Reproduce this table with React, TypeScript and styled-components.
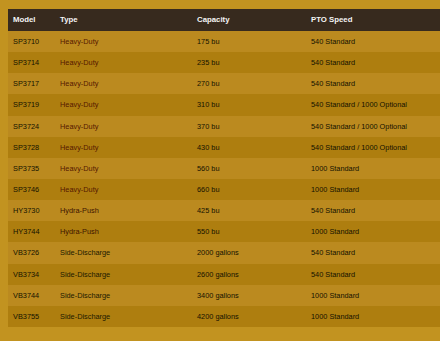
import React from 'react';
import styled, { createGlobalStyle } from 'styled-components';

type Kind = 'heavy' | 'hydra' | 'side';

interface Row {
    model: string;
    type: string;
    kind: Kind;
    capacity: string;
    pto: string;
}

const ROWS: Row[] = [
    { model: 'SP3710', type: 'Heavy-Duty', kind: 'heavy', capacity: '175 bu', pto: '540 Standard' },
    { model: 'SP3714', type: 'Heavy-Duty', kind: 'heavy', capacity: '235 bu', pto: '540 Standard' },
    { model: 'SP3717', type: 'Heavy-Duty', kind: 'heavy', capacity: '270 bu', pto: '540 Standard' },
    { model: 'SP3719', type: 'Heavy-Duty', kind: 'heavy', capacity: '310 bu', pto: '540 Standard / 1000 Optional' },
    { model: 'SP3724', type: 'Heavy-Duty', kind: 'heavy', capacity: '370 bu', pto: '540 Standard / 1000 Optional' },
    { model: 'SP3728', type: 'Heavy-Duty', kind: 'heavy', capacity: '430 bu', pto: '540 Standard / 1000 Optional' },
    { model: 'SP3735', type: 'Heavy-Duty', kind: 'heavy', capacity: '560 bu', pto: '1000 Standard' },
    { model: 'SP3746', type: 'Heavy-Duty', kind: 'heavy', capacity: '660 bu', pto: '1000 Standard' },
    { model: 'HY3730', type: 'Hydra-Push', kind: 'hydra', capacity: '425 bu', pto: '540 Standard' },
    { model: 'HY3744', type: 'Hydra-Push', kind: 'hydra', capacity: '550 bu', pto: '1000 Standard' },
    { model: 'VB3726', type: 'Side-Discharge', kind: 'side', capacity: '2000 gallons', pto: '540 Standard' },
    { model: 'VB3734', type: 'Side-Discharge', kind: 'side', capacity: '2600 gallons', pto: '540 Standard' },
    { model: 'VB3744', type: 'Side-Discharge', kind: 'side', capacity: '3400 gallons', pto: '1000 Standard' },
    { model: 'VB3755', type: 'Side-Discharge', kind: 'side', capacity: '4200 gallons', pto: '1000 Standard' },
];

const TYPE_COLORS: Record<Kind, string> = {
    heavy: '#551800',
    hydra: '#3c1400',
    side: '#1c1a00',
};

const GlobalStyle = createGlobalStyle`
    html, body {
        margin: 0;
        padding: 0;
    }
    body {
        background: #c29320;
        padding: 9px 0 0 8px;
        font-family: 'Liberation Sans', Arial, sans-serif;
    }
`;

const Table = styled.table`
    width: 432px;
    border-collapse: collapse;
    table-layout: fixed;
`;

const HeadCell = styled.th<{ $width: number }>`
    box-sizing: border-box;
    width: ${(props) => props.$width}px;
    background: #372a1e;
    color: #f4f4f4;
    font-weight: bold;
    font-size: 7.8px;
    line-height: 10px;
    padding: 6px 5px;
    text-align: left;
`;

const BodyRow = styled.tr<{ $dark: boolean }>`
    background: ${(props) => (props.$dark ? '#ae7e0f' : '#bb8a1f')};
`;

const Cell = styled.td<{ $color?: string }>`
    color: ${(props) => props.$color ?? '#141200'};
    font-size: 7.35px;
    line-height: 9.14px;
    padding: 6px 5px;
    white-space: nowrap;
`;

export default function App() {
    return (
        <>
            <GlobalStyle />
            <Table>
                <thead>
                    <tr>
                        <HeadCell $width={47}>Model</HeadCell>
                        <HeadCell $width={137}>Type</HeadCell>
                        <HeadCell $width={114}>Capacity</HeadCell>
                        <HeadCell $width={134}>PTO Speed</HeadCell>
                    </tr>
                </thead>
                <tbody>
                    {ROWS.map((row, i) => (
                        <BodyRow key={row.model} $dark={i % 2 === 1}>
                            <Cell>{row.model}</Cell>
                            <Cell $color={TYPE_COLORS[row.kind]}>{row.type}</Cell>
                            <Cell>{row.capacity}</Cell>
                            <Cell>{row.pto}</Cell>
                        </BodyRow>
                    ))}
                </tbody>
            </Table>
        </>
    );
}
